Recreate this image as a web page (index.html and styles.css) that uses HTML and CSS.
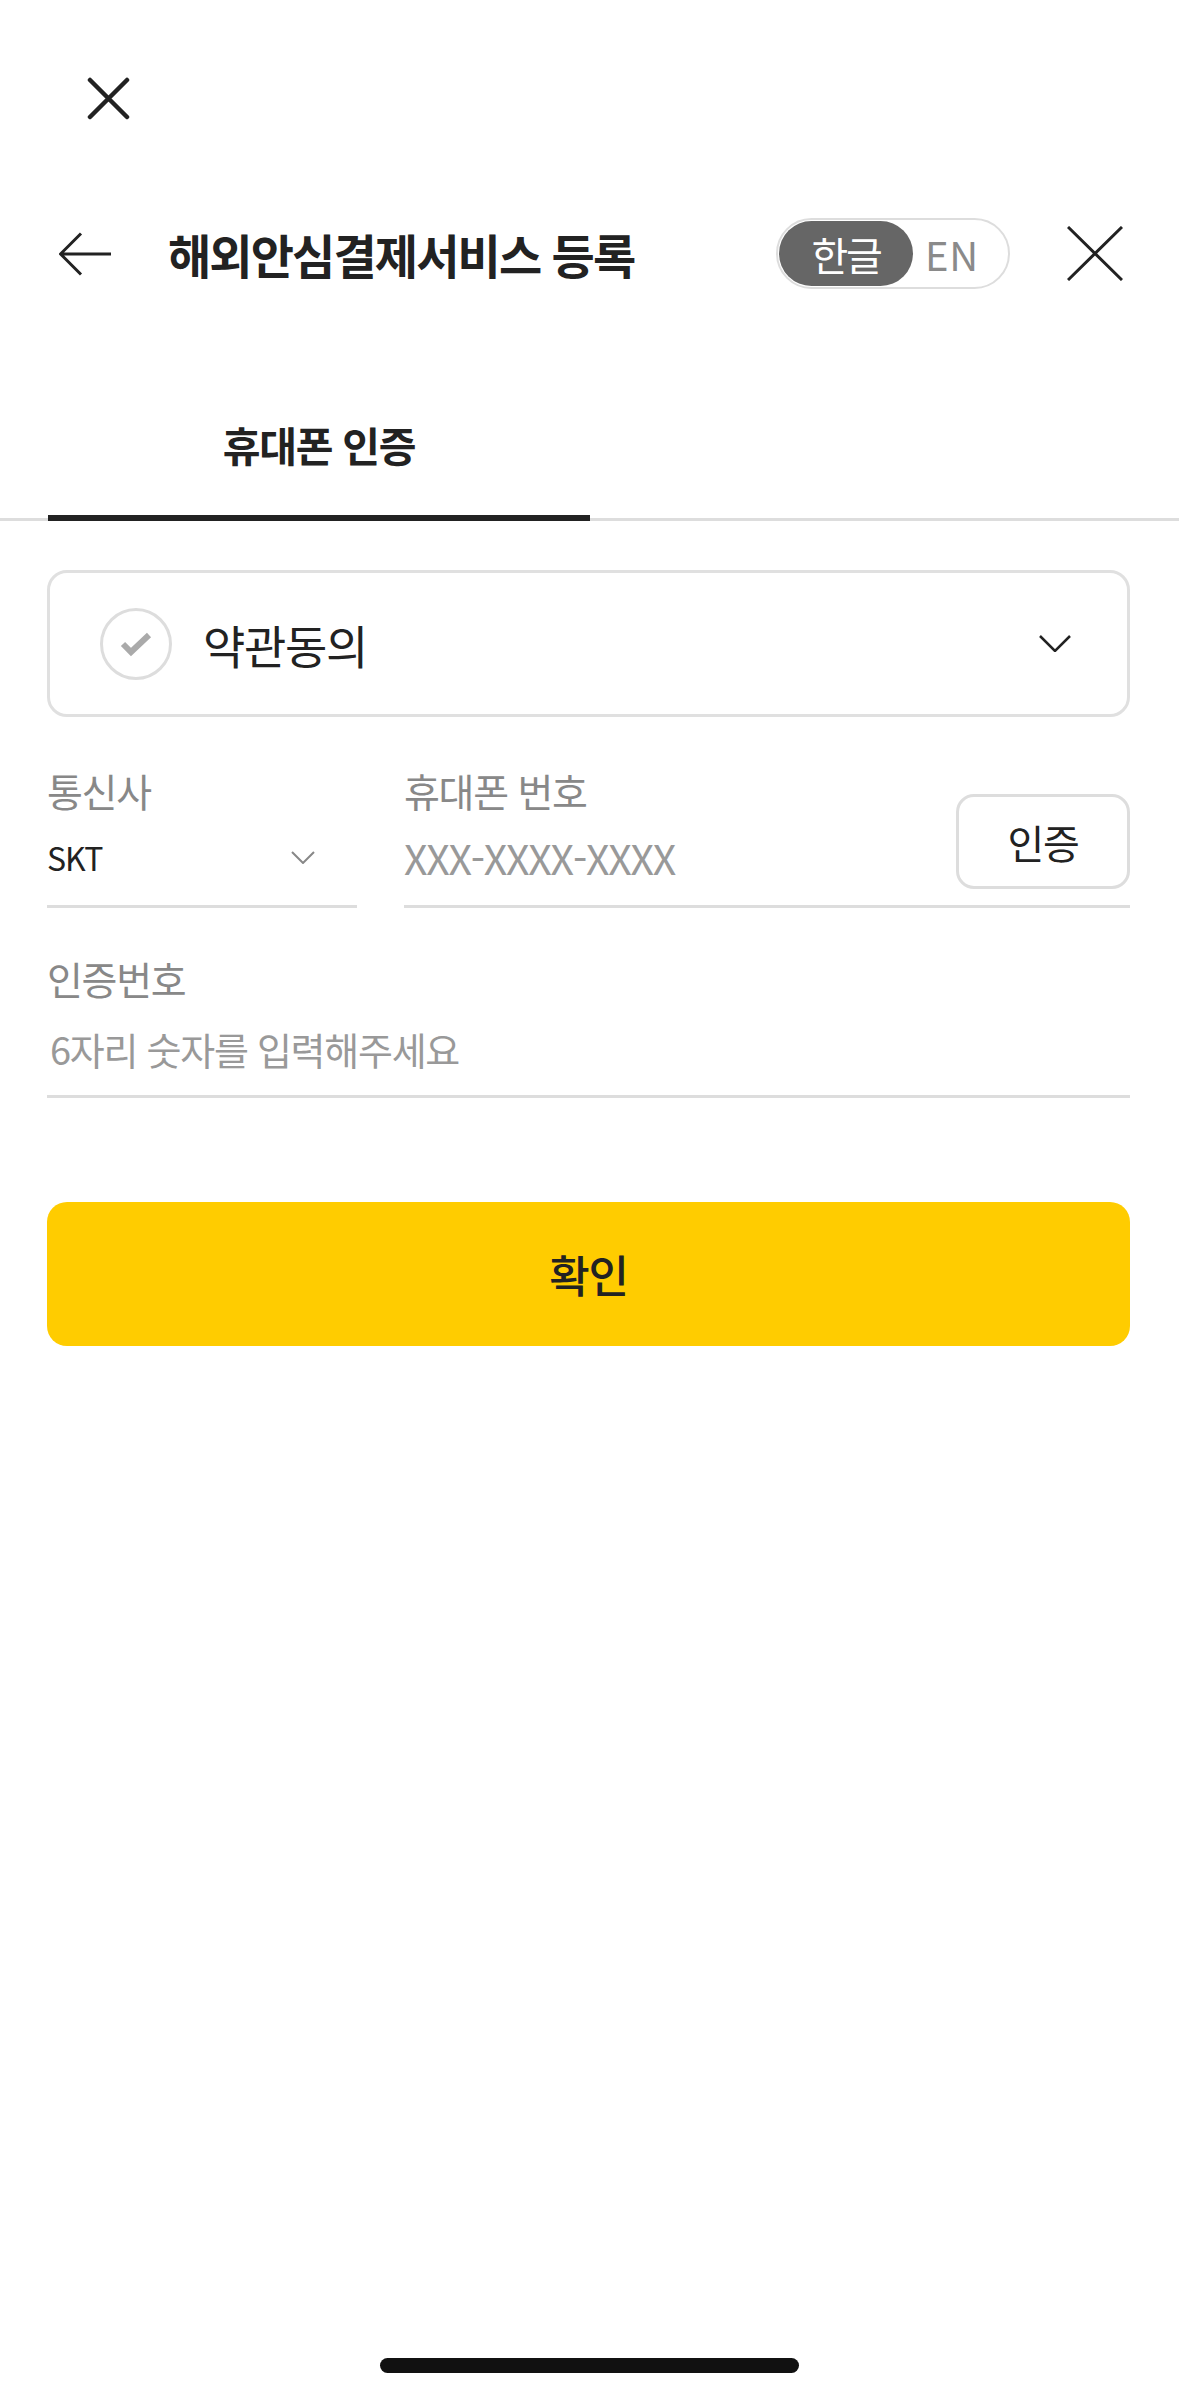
FILE: index.html
```html
<!DOCTYPE html>
<html lang="ko">
<head>
    <meta charset="utf-8">
    <title>해외안심결제서비스 등록</title>
    <link rel="stylesheet" href="styles.css">
</head>
<body>
    <div class="app">
        <div class="topbar">
            <button class="icon-btn top-close" aria-label="닫기">
                <svg width="43" height="43" viewBox="0 0 43 43"><path d="M3 3L40 40M40 3L3 40" stroke="#222" stroke-width="4.5" stroke-linecap="round" fill="none"/></svg>
            </button>
        </div>

        <header class="header">
            <button class="icon-btn back" aria-label="뒤로">
                <svg width="52" height="44" viewBox="0 0 52 44"><path d="M22 1.5L1.5 22L22 42.5M1.5 22H52" stroke="#222" stroke-width="3" fill="none"/></svg>
            </button>
            <h1 class="title">해외안심결제서비스 등록</h1>
            <div class="lang-toggle">
                <span class="lang active">한글</span>
                <span class="lang">EN</span>
            </div>
            <button class="icon-btn close" aria-label="닫기">
                <svg width="56" height="55" viewBox="0 0 56 55"><path d="M1 1L55 54M55 1L1 54" stroke="#222" stroke-width="3" fill="none"/></svg>
            </button>
        </header>

        <nav class="tabs">
            <div class="tab active">휴대폰 인증</div>
        </nav>

        <main class="form">
            <div class="terms">
                <span class="check">
                    <svg width="32" height="26" viewBox="0 0 32 26"><path d="M3 13L11 21L29 4" stroke="#aaa" stroke-width="6" fill="none"/></svg>
                </span>
                <span class="terms-label">약관동의</span>
                <svg class="terms-arrow" width="32" height="17" viewBox="0 0 32 17"><path d="M1 1L16 16L31 1" stroke="#222" stroke-width="2.5" fill="none"/></svg>
            </div>

            <div class="row">
                <div class="field carrier">
                    <div class="label">통신사</div>
                    <div class="value">
                        <span>SKT</span>
                        <svg width="24" height="13" viewBox="0 0 24 13"><path d="M1 1L12 12L23 1" stroke="#888" stroke-width="2" fill="none"/></svg>
                    </div>
                </div>
                <div class="field phone">
                    <div class="phone-main">
                        <div class="label">휴대폰 번호</div>
                        <div class="placeholder num">XXX-XXXX-XXXX</div>
                    </div>
                    <button class="verify-btn">인증</button>
                </div>
            </div>

            <div class="field code">
                <div class="label">인증번호</div>
                <div class="placeholder">6자리 숫자를 입력해주세요</div>
            </div>

            <button class="submit">확인</button>
        </main>

        <div class="home-indicator"></div>
    </div>
</body>
</html>
```

FILE: styles.css
```css
* {
    box-sizing: border-box;
}
body {
    margin: 0;
    font-family: "Noto Sans CJK KR", "Noto Sans", sans-serif;
    color: #222;
    background: #fff;
    letter-spacing: -0.08em;
}
button {
    font-family: inherit;
    letter-spacing: inherit;
    background: none;
    border: none;
    padding: 0;
    color: inherit;
    cursor: pointer;
}
.app {
    min-height: 100vh;
    display: flex;
    flex-direction: column;
}
.icon-btn {
    display: flex;
}
.icon-btn svg {
    display: block;
}
.topbar {
    display: flex;
    padding: 77px 0 0 87px;
}
.header {
    display: flex;
    align-items: center;
    height: 71px;
    margin-top: 98px;
    padding: 0 56px 0 59px;
}
.title {
    flex: 1;
    margin: 0 0 0 57px;
    font-size: 47px;
    font-weight: 700;
    line-height: 71px;
    letter-spacing: -0.04em;
}
.lang-toggle {
    display: flex;
    align-items: center;
    width: 234px;
    height: 71px;
    border: 2px solid #ddd;
    border-radius: 36px;
    padding: 1px;
    margin-right: 57px;
}
.lang {
    font-size: 40px;
    color: #8a8a8a;
    padding-left: 12px;
    letter-spacing: 0.02em;
}
.lang.active {
    width: 134px;
    height: 65px;
    border-radius: 33px;
    background: #666;
    color: #fff;
    padding: 0;
    display: flex;
    align-items: center;
    justify-content: center;
    letter-spacing: -0.06em;
}
.tabs {
    margin-top: 100px;
    padding: 0 47px 0 48px;
    border-bottom: 3px solid #ddd;
    display: flex;
}
.tab {
    width: 542px;
    text-align: center;
    font-size: 41px;
    font-weight: 700;
    line-height: 60px;
    padding: 25px 0 41px;
    margin-bottom: -3px;
}
.tab.active {
    border-bottom: 6px solid #222;
}
.form {
    padding: 0 49px 0 47px;
    display: flex;
    flex-direction: column;
}
.terms {
    margin-top: 49px;
    height: 147px;
    border: 3px solid #e0e0e0;
    border-radius: 20px;
    display: flex;
    align-items: center;
    padding: 0 56px 0 50px;
}
.check {
    width: 72px;
    height: 72px;
    border: 3px solid #ddd;
    border-radius: 50%;
    display: flex;
    align-items: center;
    justify-content: center;
}
.terms-label {
    flex: 1;
    margin-left: 31px;
    font-size: 46px;
}
.row {
    display: flex;
    gap: 47px;
    margin-top: 48px;
}
.field {
    border-bottom: 3px solid #ddd;
}
.label {
    font-size: 39px;
    line-height: 50px;
    color: #888;
}
.carrier {
    width: 310px;
    padding-bottom: 18px;
}
.carrier .value {
    height: 72px;
    padding: 12px 42px 0 0;
    display: flex;
    align-items: center;
    justify-content: space-between;
    font-size: 32px;
    letter-spacing: -0.03em;
}
.phone {
    flex: 1;
    display: flex;
    align-items: flex-end;
}
.phone-main {
    flex: 1;
    padding-bottom: 18px;
}
.placeholder {
    color: #999;
    font-size: 38px;
}
.placeholder.num {
    height: 72px;
    padding-top: 13px;
    line-height: 59px;
    font-size: 41px;
    letter-spacing: -0.03em;
}
.verify-btn {
    width: 174px;
    height: 95px;
    margin-bottom: 16px;
    border: 3px solid #ddd;
    border-radius: 18px;
    font-size: 40px;
    color: #222;
}
.code {
    margin-top: 45px;
}
.code .placeholder {
    line-height: 50px;
    margin-top: 21px;
    padding: 0 0 21px 3px;
}
.submit {
    margin-top: 104px;
    height: 144px;
    border-radius: 20px;
    background: #ffcc00;
    font-size: 44px;
    font-weight: 500;
    color: #222;
}
.home-indicator {
    margin: auto auto 24px;
    width: 419px;
    height: 15px;
    border-radius: 8px;
    background: #111;
}
```
